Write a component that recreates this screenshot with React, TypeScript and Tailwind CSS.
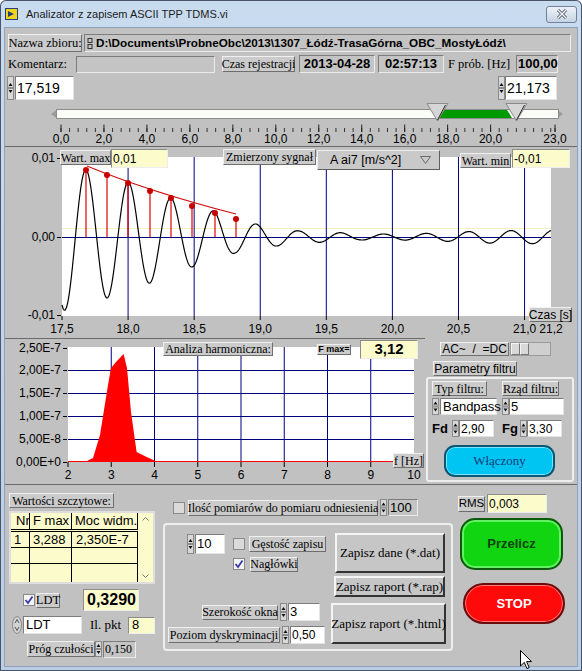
import React from 'react';

const serif = "font-['Liberation_Serif',serif]";
const sans = "font-['Liberation_Sans',Arial,sans-serif]";
const raised = 'bg-[#cbcbcb] border border-t-[#f0f0f0] border-l-[#f0f0f0] border-b-[#6e6e6e] border-r-[#6e6e6e]';
const sunkGray = 'bg-[#c4c4c4] border border-t-[#7c7c7c] border-l-[#7c7c7c] border-b-[#ececec] border-r-[#ececec]';
const sunkWhite = 'bg-white border border-t-[#7c7c7c] border-l-[#7c7c7c] border-b-[#e4e4e4] border-r-[#e4e4e4]';
const sunkYellow = 'bg-[#fcfbcb] border border-t-[#8c8c8c] border-l-[#8c8c8c] border-b-[#ededed] border-r-[#ededed]';
const btn3d = 'bg-[#c6c6c6] border-2 border-t-[#f4f4f4] border-l-[#f4f4f4] border-b-[#333333] border-r-[#333333]';
const NAVY = '#000080';

function Lbl({ children, className = '' }: { children: React.ReactNode; className?: string }) {
  return (
    <div className={`flex items-center justify-center whitespace-nowrap leading-none text-black shrink-0 ${raised} ${className}`}>
      {children}
    </div>
  );
}

function Spin({ h = 16 }: { h?: number }) {
  const m = h / 2;
  return (
    <svg width="7" height={h} className="block shrink-0">
      <rect x="0.5" y="0.5" width="6" height={m - 1} fill="#d8d8d8" stroke="#8a8a8a" />
      <rect x="0.5" y={m + 0.5} width="6" height={m - 1} fill="#d8d8d8" stroke="#8a8a8a" />
      <path d={`M1.5 ${m - 2} L3.5 ${m - 5} L5.5 ${m - 2} Z`} fill="#111" />
      <path d={`M1.5 ${m + 2} L3.5 ${m + 5} L5.5 ${m + 2} Z`} fill="#111" />
    </svg>
  );
}

function Check({ on = false }: { on?: boolean }) {
  return (
    <svg width="12" height="12" className="block shrink-0">
      <rect x="0.5" y="0.5" width="11" height="11" fill={on ? '#f4f4f4' : '#dadada'} stroke="#8a8a8a" />
      {on && <path d="M2.5 6 L5 9 L9.5 2.5" fill="none" stroke="#3a3aa6" strokeWidth="1.8" />}
    </svg>
  );
}

function TitleBar() {
  return (
    <div className="h-[28px] flex items-center shrink-0">
      <svg width="13" height="12" className="ml-[5px] block">
        <rect x="0.5" y="0.5" width="12" height="11" fill="#f2d21a" stroke="#23407a" />
        <path d="M3 3 L9 6 L3 9 Z" fill="#23407a" />
      </svg>
      <span className={`ml-[8px] text-[11px] text-[#1c1c1c] ${sans}`}>Analizator z zapisem ASCII TPP TDMS.vi</span>
      <div className="ml-auto mr-[5px] w-[31px] h-[17px] rounded-[3px] border border-[#6f819b] bg-gradient-to-b from-[#eef2f8] to-[#c6d3e4] flex items-center justify-center">
        <svg width="12" height="10">
          <path d="M2 1 L10 9 M10 1 L2 9" stroke="#4a5466" strokeWidth="3" />
          <path d="M2 1 L10 9 M10 1 L2 9" stroke="#f6f8fb" strokeWidth="1.4" />
        </svg>
      </div>
    </div>
  );
}

function RangeSlider() {
  const sx = (v: number) => 61 + v * 21.48;
  const minor: number[] = [];
  for (let i = 0; i * 0.4 <= 23.01; i++) minor.push(i * 0.4);
  minor.push(23);
  const major = [0, 2, 4, 6, 8, 10, 12, 14, 16, 18, 20, 23];
  const thumb = (c: number) => (
    <g>
      <path d={`M${c - 10.5} 103.5 L${c + 10.5} 103.5 L${c} 121 Z`} fill="#d6d6d6" stroke="#8a8a8a" />
      <path d={`M${c} 120 L${c + 8} 105`} stroke="#2a2a2a" strokeWidth="1" />
    </g>
  );
  return (
    <svg width="572" height="46" viewBox="5 100 572 46" className="block shrink-0">
      <path d="M51 114 L56 110.5 L56 117.5 Z" fill="#9a9a9a" />
      <path d="M563 114 L558 110.5 L558 117.5 Z" fill="#9a9a9a" />
      <rect x="56.5" y="109.5" width="502" height="9" fill="#f9fcf7" stroke="#8c8c8c" />
      <path d="M440 110 L507 110 L512 118 L436 118 Z" fill="#009a00" />
      {thumb(437.5)}
      {thumb(516.5)}
      {minor.map((v, i) => (
        <line key={i} x1={sx(v)} x2={sx(v)} y1="128" y2="132" stroke="#333" />
      ))}
      {major.map((v) => (
        <line key={'m' + v} x1={sx(v)} x2={sx(v)} y1="124.5" y2="132" stroke="#222" />
      ))}
      {major.map((v) => (
        <text key={'t' + v} x={sx(v)} y="143" textAnchor="middle" fontSize="12" fontFamily="Liberation Sans" fill="#000">
          {v.toFixed(1).replace('.', ',')}
        </text>
      ))}
    </svg>
  );
}

const ampPts: [number, number][] = [
  [62, 74], [86, 67], [107, 61], [128, 55], [150, 46], [171, 39], [192, 30], [214, 26], [235, 16], [256, 13],
  [277, 9], [300, 6], [330, 5], [360, 3], [400, 3], [440, 4], [480, 6], [551, 7],
];
function amp(x: number) {
  for (let i = 0; i < ampPts.length - 1; i++) {
    const [x0, a0] = ampPts[i];
    const [x1, a1] = ampPts[i + 1];
    if (x >= x0 && x <= x1) return a0 + ((a1 - a0) * (x - x0)) / (x1 - x0);
  }
  return 7;
}
function signalPath() {
  let d = '';
  for (let x = 62; x <= 551; x += 0.5) {
    const y = 237 - amp(x) * Math.cos((2 * Math.PI * (x - 86)) / 42.5);
    d += `${x === 62 ? 'M' : 'L'}${x.toFixed(1)} ${y.toFixed(1)} `;
  }
  return d;
}

function SignalChart() {
  const tx = (t: number) => 62 + (t - 17.5) * 132.16;
  const grid = [18, 18.5, 19, 19.5, 20, 20.5, 21];
  const xl: [string, number][] = [
    ['17,5', 17.5], ['18,0', 18], ['18,5', 18.5], ['19,0', 19], ['19,5', 19.5], ['20,0', 20], ['20,5', 20.5], ['21,0', 21], ['21,2', 21.2],
  ];
  const stems: [number, number][] = [[86, 170], [107, 175], [128, 183], [150, 191], [171, 198], [192, 206], [215, 213], [236, 219]];
  return (
    <div className="relative h-[192px] shrink-0">
      <svg width="572" height="192" viewBox="5 146 572 192" className="block">
        <line x1="5" x2="577" y1="146.5" y2="146.5" stroke="#6a6a6a" />
        <rect x="62" y="157" width="489" height="159" fill="#fff" />
        <line x1="62" x2="551" y1="228.5" y2="228.5" stroke="#f3f0c4" />
        {grid.map((t) => (
          <line key={t} x1={tx(t)} x2={tx(t)} y1="157" y2="316" stroke={NAVY} />
        ))}
        <line x1="62" x2="551" y1="237.5" y2="237.5" stroke={NAVY} />
        {[158, 237, 315].map((y) => (
          <line key={y} x1="57" x2="61" y1={y + 0.5} y2={y + 0.5} stroke="#000" />
        ))}
        <text x="55" y="162" textAnchor="end" fontSize="12" fontFamily="Liberation Sans">0,01</text>
        <text x="55" y="241" textAnchor="end" fontSize="12" fontFamily="Liberation Sans">0,00</text>
        <text x="55" y="319" textAnchor="end" fontSize="12" fontFamily="Liberation Sans">-0,01</text>
        {xl.map(([s, t]) => (
          <g key={s}>
            <line x1={tx(t)} x2={tx(t)} y1="316" y2="320" stroke="#000" />
            <text x={tx(t)} y="333" textAnchor="middle" fontSize="12" fontFamily="Liberation Sans">{s}</text>
          </g>
        ))}
        <path d={signalPath()} fill="none" stroke="#000" strokeWidth="1.2" />
        {stems.map(([x, y]) => (
          <line key={x} x1={x} x2={x} y1="237" y2={y} stroke="#e00000" strokeWidth="1.2" />
        ))}
        <path d="M87 166 Q150 192 236 214" fill="none" stroke="#d01010" strokeWidth="1.2" />
        {stems.map(([x, y]) => (
          <circle key={'c' + x} cx={x} cy={y} r="3" fill="#c80000" />
        ))}
      </svg>
      <Lbl className={`absolute left-[55px] top-[4px] w-[51px] h-[15px] text-[12px] ${serif}`}>Wart. max</Lbl>
      <div className={`absolute left-[106px] top-[3px] w-[57px] h-[19px] flex items-center pl-[1px] text-[12px] ${sans} ${sunkYellow}`}>0,01</div>
      <Lbl className={`absolute left-[218px] top-[3px] w-[93px] h-[16px] text-[12px] ${serif}`}>Zmierzony sygnał</Lbl>
      <div className={`absolute left-[312px] top-[4px] w-[123px] h-[20px] flex items-center pl-[12px] text-[12.5px] ${sans} bg-[#c9c9c9] border border-t-[#eeeeee] border-l-[#eeeeee] border-b-[#5e5e5e] border-r-[#5e5e5e]`}>
        A ai7 [m/s^2]
        <svg width="11" height="8" className="ml-auto mr-[8px]">
          <path d="M0.5 0.5 L10.5 0.5 L5.5 7.5 Z" fill="none" stroke="#6a6a6a" />
        </svg>
      </div>
      <Lbl className={`absolute left-[455px] top-[7px] w-[51px] h-[15px] text-[12px] ${serif}`}>Wart. min</Lbl>
      <div className={`absolute left-[507px] top-[3px] w-[58px] h-[19px] flex items-center pl-[1px] text-[12px] ${sans} ${sunkYellow}`}>-0,01</div>
      <Lbl className={`absolute left-[524px] top-[161px] w-[43px] h-[15px] text-[12px] ${sans}`}>Czas [s]</Lbl>
    </div>
  );
}

function HarmonicChart() {
  const fx = (f: number) => 68 + (f - 2) * 43.25;
  const ys: [string, number][] = [
    ['2,50E-7', 348], ['2,00E-7', 370], ['1,50E-7', 393], ['1,00E-7', 416], ['5,00E-8', 439], ['0,00E+0', 462],
  ];
  const area = '68.7,462 87,461 93,458 100,435 108,385 111,368 116,362 123.6,354 127,368 131,412 136.6,452 146.6,457 157.8,462';
  return (
    <div className="relative w-[420px] h-[146px] shrink-0">
      <svg width="420" height="146" viewBox="5 338 420 146" className="block">
        <line x1="5" x2="425" y1="338.5" y2="338.5" stroke="#6a6a6a" />
        <rect x="68" y="347" width="346" height="115" fill="#fff" />
        {[370, 393, 416, 439].map((y) => (
          <line key={y} x1="68" x2="414" y1={y + 0.5} y2={y + 0.5} stroke={NAVY} />
        ))}
        {[3, 4, 5, 6, 7, 8, 9].map((f) => (
          <line key={f} x1={fx(f)} x2={fx(f)} y1="347" y2="462" stroke={NAVY} />
        ))}
        <polygon points={area} fill="#ff0000" />
        <line x1="68" x2="414" y1="461.5" y2="461.5" stroke="#ff0000" />
        {ys.map(([s, y]) => (
          <g key={s}>
            <line x1="63" x2="67" y1={y + 0.5} y2={y + 0.5} stroke="#000" />
            <text x="61" y={y + 4} textAnchor="end" fontSize="12" fontFamily="Liberation Sans">{s}</text>
          </g>
        ))}
        {[2, 3, 4, 5, 6, 7, 8, 9, 10].map((f) => (
          <g key={'x' + f}>
            <line x1={fx(f)} x2={fx(f)} y1="462" y2="467" stroke="#000" />
            <text x={fx(f)} y="479" textAnchor="middle" fontSize="12" fontFamily="Liberation Sans">{f}</text>
          </g>
        ))}
      </svg>
      <Lbl className={`absolute left-[158px] top-[4px] w-[110px] h-[14px] text-[12px] ${serif}`}>Analiza harmoniczna:</Lbl>
      <Lbl className={`absolute left-[312px] top-[6px] w-[34px] h-[11px] text-[9px] font-bold ${sans}`}>F max=</Lbl>
      <div className={`absolute left-[355px] top-[2px] w-[58px] h-[19px] flex items-center justify-center text-[15px] font-bold ${sans} ${sunkYellow}`}>3,12</div>
      <Lbl className={`absolute left-[388px] top-[115px] w-[31px] h-[15px] text-[12px] ${serif}`}>f [Hz]</Lbl>
    </div>
  );
}

function FilterPanel() {
  return (
    <div className="w-[152px] flex flex-col shrink-0">
      <div className="mt-[4px] h-[14px] flex">
        <Lbl className={`ml-[15px] w-[69px] text-[12px] ${sans}`}>AC~&nbsp;&nbsp;/&nbsp;&nbsp;=DC</Lbl>
        <div className="ml-[1px] w-[41px] h-[14px] bg-[#cfcfcf] border border-[#9a9a9a] flex">
          <div className="w-[9px] h-full bg-[#d8d8d8] border border-t-[#f4f4f4] border-l-[#f4f4f4] border-b-[#777] border-r-[#777]" />
          <div className="w-[9px] h-full bg-[#d8d8d8] border border-t-[#f4f4f4] border-l-[#f4f4f4] border-b-[#777] border-r-[#777]" />
        </div>
      </div>
      <Lbl className={`mt-[5px] ml-[8px] w-[84px] h-[15px] text-[12px] ${sans}`}>Parametry filtru</Lbl>
      <div className="mt-[1px] ml-[1px] w-[148px] h-[105px] border-2 border-[#eeeeee] rounded-[3px] flex flex-col">
        <div className="mt-[2px] h-[15px] flex">
          <Lbl className={`ml-[4px] w-[55px] text-[12px] ${serif}`}>Typ filtru:</Lbl>
          <Lbl className={`ml-[15px] w-[57px] text-[12px] ${serif}`}>Rząd filtru:</Lbl>
        </div>
        <div className="mt-[2px] h-[17px] flex items-center">
          <div className="ml-[4px]"><Spin h={17} /></div>
          <div className={`ml-[1px] w-[57px] h-[17px] flex items-center pl-[2px] text-[13px] ${sans} ${sunkWhite}`}>Bandpass</div>
          <div className="ml-[5px]"><Spin h={17} /></div>
          <div className={`w-[55px] h-[17px] flex items-center pl-[1px] text-[13px] ${sans} ${sunkWhite}`}>5</div>
        </div>
        <div className="mt-[5px] h-[17px] flex items-center">
          <span className={`ml-[4px] w-[14px] text-[13px] font-bold ${sans}`}>Fd</span>
          <div className="ml-[6px]"><Spin h={17} /></div>
          <div className={`ml-[0px] w-[35px] h-[17px] flex items-center pl-[1px] text-[12px] ${sans} ${sunkWhite}`}>2,90</div>
          <span className={`ml-[8px] w-[15px] text-[13px] font-bold ${sans}`}>Fg</span>
          <div className="ml-[3px]"><Spin h={17} /></div>
          <div className={`w-[35px] h-[17px] flex items-center pl-[1px] text-[12px] ${sans} ${sunkWhite}`}>3,30</div>
        </div>
        <div className={`mt-[8px] ml-[16px] w-[111px] h-[32px] rounded-[11px] bg-[#00c4f2] border-2 border-[#0b5874] shadow-[inset_0_0_0_1px_#7fe4ff] flex items-center justify-center text-[13px] text-[#17407a] ${serif}`}>
          Włączony
        </div>
      </div>
    </div>
  );
}

function PeakTable() {
  const row = (a: string, b: string, c: string, h: string, last = false) => (
    <div className={`flex ${h} ${last ? '' : 'border-b border-black'} text-[13px] ${sans}`}>
      <div className="w-[19px] border-r border-black pl-[3px] overflow-hidden leading-[16px]">{a}</div>
      <div className="w-[42px] border-r border-black pl-[3px] leading-[16px]">{b}</div>
      <div className="w-[66px] border-r border-black pl-[4px] leading-[16px]">{c}</div>
    </div>
  );
  return (
    <div className="mt-[3px] ml-[4px] w-[146px] h-[73px] border-2 border-[#dedede] bg-[#fcfbcb] flex">
      <div className="w-[127px] flex flex-col">
        <div className={`flex h-[16px] text-[13px] ${sans}`}>
          <div className="w-[19px] border-r border-black pl-[5px] overflow-hidden whitespace-nowrap leading-[16px]">Nr</div>
          <div className="w-[42px] border-r border-black pl-[3px] leading-[16px]">F max</div>
          <div className="w-[66px] border-r border-black pl-[3px] leading-[16px] whitespace-nowrap">Moc widm.</div>
        </div>
        <div className="h-[3px] border-t border-b border-black" />
        {row('1', '3,288', '2,350E-7', 'h-[16px]')}
        {row('', '', '', 'h-[16px]')}
        {row('', '', '', 'h-[18px]', true)}
      </div>
      <div className="w-[15px] flex flex-col items-center justify-between py-[4px]">
        <svg width="7" height="4"><path d="M0.5 3.5 L3.5 0.5 L6.5 3.5" fill="none" stroke="#777" /></svg>
        <svg width="7" height="4"><path d="M0.5 0.5 L3.5 3.5 L6.5 0.5" fill="none" stroke="#777" /></svg>
      </div>
    </div>
  );
}

function LeftBottom() {
  return (
    <div className="w-[155px] flex flex-col shrink-0">
      <Lbl className={`mt-[8px] ml-[4px] w-[105px] h-[15px] text-[12px] ${serif}`}>Wartości szczytowe:</Lbl>
      <PeakTable />
      <div className="mt-[5px] h-[22px] flex items-center">
        <div className="ml-[18px]"><Check on /></div>
        <Lbl className={`ml-[1px] w-[24px] h-[15px] text-[12.5px] ${serif}`}>LDT</Lbl>
        <div className={`ml-[23px] w-[56px] h-[22px] flex items-center pl-[3px] text-[16px] font-bold ${sans} ${sunkYellow}`}>0,3290</div>
      </div>
      <div className="mt-[5px] h-[18px] flex items-center">
        <svg width="10" height="18" className="ml-[7px] block">
          <ellipse cx="5" cy="9" rx="4.5" ry="8.5" fill="#d2d2d2" stroke="#8a8a8a" />
          <path d="M3 7 L5 3.5 L7 7" fill="none" stroke="#555" />
          <path d="M3 11 L5 14.5 L7 11" fill="none" stroke="#555" />
        </svg>
        <div className={`ml-[1px] w-[59px] h-[18px] flex items-center pl-[2px] text-[13px] ${sans} ${sunkWhite}`}>LDT</div>
        <span className={`ml-[8px] text-[13px] ${serif}`}>Il. pkt</span>
        <div className={`ml-[7px] w-[27px] h-[17px] flex items-center pl-[3px] text-[13px] ${sans} ${sunkYellow}`}>8</div>
      </div>
      <div className="mt-[7px] h-[16px] flex items-center">
        <Lbl className={`ml-[22px] w-[68px] h-[16px] text-[12px] ${serif}`}>Próg czułości</Lbl>
        <Spin h={16} />
        <div className={`ml-[1px] w-[33px] h-[17px] flex items-center pl-[1px] text-[12px] ${serif} ${sunkGray}`}>0,150</div>
      </div>
    </div>
  );
}

function MiddleBottom() {
  return (
    <div className="w-[295px] flex flex-col shrink-0">
      <div className="mt-[14px] h-[17px] flex items-center">
        <div className="ml-[13px]"><Check /></div>
        <Lbl className={`ml-[3px] w-[190px] h-[16px] text-[12px] ${serif}`}>Ilość pomiarów do pomiaru odniesienia</Lbl>
        <div className="ml-[2px]"><Spin h={17} /></div>
        <div className={`ml-[1px] w-[30px] h-[17px] flex items-center pl-[1px] text-[13px] ${sans} ${sunkGray}`}>100</div>
      </div>
      <div className="mt-[7px] ml-[3px] w-[290px] h-[128px] border-2 border-[#efefef] rounded-[4px] flex">
        <div className="w-[166px] flex flex-col">
          <div className="mt-[9px] h-[20px] flex items-center">
            <div className="ml-[22px]"><Spin h={20} /></div>
            <div className={`ml-[1px] w-[30px] h-[20px] flex items-center pl-[1px] text-[13px] ${sans} ${sunkWhite}`}>10</div>
            <div className="ml-[8px]"><Check /></div>
            <Lbl className={`ml-[4px] w-[77px] h-[16px] text-[12px] ${serif}`}>Gęstość zapisu</Lbl>
          </div>
          <div className="mt-[3px] h-[14px] flex items-center">
            <div className="ml-[68px]"><Check on /></div>
            <Lbl className={`ml-[5px] w-[48px] h-[15px] text-[12px] ${serif}`}>Nagłówki</Lbl>
          </div>
          <div className="mt-[32px] h-[18px] flex items-center">
            <Lbl className={`ml-[37px] w-[76px] h-[15px] text-[12px] ${serif}`}>Szerokość okna</Lbl>
            <div className="ml-[2px]"><Spin h={18} /></div>
            <div className={`ml-[1px] w-[32px] h-[18px] flex items-center pl-[1px] text-[13px] ${sans} ${sunkWhite}`}>3</div>
          </div>
          <div className="mt-[5px] h-[18px] flex items-center">
            <Lbl className={`ml-[3px] w-[112px] h-[16px] text-[12px] ${serif}`}>Poziom dyskryminacji</Lbl>
            <div className="ml-[2px]"><Spin h={18} /></div>
            <div className={`ml-[1px] w-[35px] h-[18px] flex items-center pl-[1px] text-[12px] ${sans} ${sunkWhite}`}>0,50</div>
          </div>
        </div>
        <div className="flex flex-col">
          <div className={`mt-[8px] ml-[4px] w-[110px] h-[40px] flex items-center justify-center whitespace-nowrap text-[13px] ${serif} ${btn3d}`}>Zapisz dane (*.dat)</div>
          <div className={`mt-[3px] ml-[3px] w-[111px] h-[21px] flex items-center justify-center whitespace-nowrap text-[13px] ${serif} ${btn3d}`}>Zapisz raport (*.rap)</div>
          <div className={`mt-[6px] ml-[0px] w-[115px] h-[41px] flex items-center justify-center whitespace-nowrap text-[13px] ${serif} ${btn3d}`}>Zapisz raport (*.html)</div>
        </div>
      </div>
    </div>
  );
}

function RightBottom() {
  return (
    <div className="w-[122px] flex flex-col shrink-0">
      <div className="mt-[9px] h-[19px] flex items-center">
        <Lbl className={`ml-[3px] w-[27px] h-[16px] text-[11.5px] ${sans}`}>RMS</Lbl>
        <div className={`ml-[2px] w-[60px] h-[19px] flex items-center pl-[1px] text-[12px] ${sans} ${sunkYellow}`}>0,003</div>
      </div>
      <div className={`mt-[5px] ml-[5px] w-[103px] h-[52px] rounded-[15px] bg-[#12d512] border-2 border-[#0c5a0c] shadow-[inset_0_0_0_2px_#62f062] flex items-center justify-center text-[13px] font-bold text-[#0d430d] ${sans}`}>
        Przelicz
      </div>
      <div className={`mt-[13px] ml-[8px] w-[102px] h-[41px] rounded-[21px] bg-[#ff0a0a] border-2 border-[#6d0a0a] shadow-[inset_0_0_0_1px_#ff7a7a] flex items-center justify-center text-[13px] font-bold text-white ${sans}`}>
        STOP
      </div>
    </div>
  );
}

export default function App() {
  return (
    <div className="w-[582px] h-[671px] bg-gradient-to-b from-[#c9dbef] to-[#b9cde6] shadow-[inset_0_0_0_1px_#4a5668] rounded-t-[6px] flex flex-col overflow-hidden">
      <TitleBar />
      <div className="mx-[5px] h-[638px] bg-[#c1c1c1] shadow-[0_0_0_1px_#8ea2bc] flex flex-col relative">
        <div className="mt-[6px] h-[18px] flex items-stretch">
          <Lbl className={`ml-[3px] w-[74px] text-[12.5px] ${serif}`}>Nazwa zbioru:</Lbl>
          <div className={`ml-[2px] w-[487px] flex items-center ${sunkGray}`}>
            <svg width="7" height="11" className="ml-[2px] block">
              <rect x="1" y="0.5" width="4" height="4" fill="none" stroke="#333" />
              <rect x="1" y="6.5" width="4" height="4" fill="none" stroke="#333" />
            </svg>
            <span className={`ml-[2px] text-[11.7px] font-bold whitespace-nowrap ${sans}`}>D:\Documents\ProbneObc\2013\1307_Łódź-TrasaGórna_OBC_MostyŁódź\</span>
          </div>
        </div>
        <div className="mt-[3px] h-[18px] flex items-center">
          <span className={`ml-[3px] w-[66px] text-[12.5px] ${serif}`}>Komentarz:</span>
          <div className={`ml-[2px] w-[139px] h-[17px] ${sunkGray}`} />
          <Lbl className={`ml-[7px] w-[73px] h-[16px] text-[12px] ${serif}`}>Czas rejestracji</Lbl>
          <div className={`ml-[4px] w-[76px] h-[18px] flex items-center justify-center text-[13px] font-bold ${sans} ${sunkGray}`}>2013-04-28</div>
          <div className={`ml-[3px] w-[66px] h-[18px] flex items-center justify-center text-[13px] font-bold ${sans} ${sunkGray}`}>02:57:13</div>
          <span className={`ml-[4px] w-[62px] text-[12.5px] whitespace-nowrap ${serif}`}>F prób. [Hz]</span>
          <div className={`ml-[6px] w-[42px] h-[18px] flex items-center pl-[1px] text-[13px] font-bold ${sans} ${sunkGray}`}>100,00</div>
        </div>
        <div className="mt-[3px] h-[24px] flex items-stretch">
          <div className="ml-[2px]"><Spin h={24} /></div>
          <div className={`ml-[1px] w-[59px] flex items-center pl-[1px] text-[14px] ${sans} ${sunkWhite}`}>17,519</div>
          <div className="ml-auto"><Spin h={24} /></div>
          <div className={`mr-[20px] w-[52px] flex items-center pl-[1px] text-[14px] ${sans} ${sunkWhite}`}>21,173</div>
        </div>
        <RangeSlider />
        <SignalChart />
        <div className="h-[146px] flex shrink-0">
          <HarmonicChart />
          <FilterPanel />
        </div>
        <div className="flex-1 flex relative border-t border-[#6a6a6a]">
          <LeftBottom />
          <MiddleBottom />
          <RightBottom />
          <svg width="13" height="20" className="absolute left-[515px] top-[165px]">
            <path d="M0.5 0.5 L0.5 16 L4.3 12.4 L7 18.6 L9.2 17.6 L6.6 11.6 L11.5 11.6 Z" fill="#fff" stroke="#000" />
          </svg>
        </div>
      </div>
    </div>
  );
}
